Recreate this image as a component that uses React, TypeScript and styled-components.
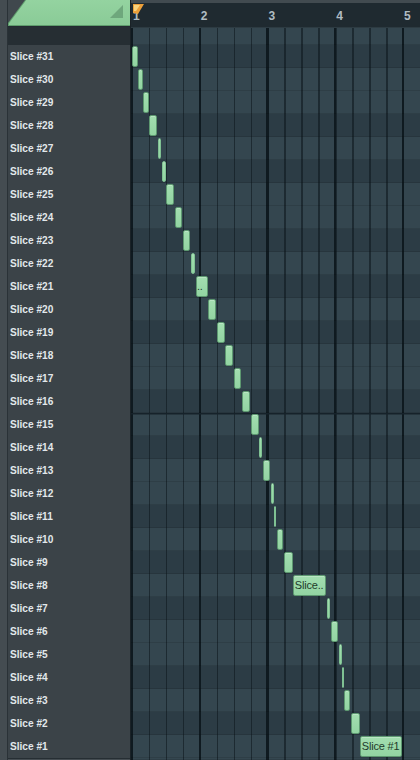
import React from 'react'
import styled, { createGlobalStyle } from 'styled-components'

const GlobalStyle = createGlobalStyle`
  html, body {
    margin: 0;
    padding: 0;
    background: #3f474c;
  }
  body {
    width: 420px;
    height: 760px;
    overflow: hidden;
    font-family: "Liberation Sans", Arial, sans-serif;
  }
`

const BAR = 67.75
const BEAT = BAR / 4
const GRID_X = 131 // page x where the roll begins

// slice edges in page px, #31 first, last value is where #1 ends
const EDGES = [
  131.7, 138.3, 143.3, 149.3, 158, 162, 166.3, 175, 183, 191, 195.5, 208.3,
  216.7, 225.3, 233.5, 241.7, 251, 259.3, 263, 271, 273.7, 277, 283.7, 293.3,
  326.7, 331, 339, 341.5, 344.3, 351, 360.3, 402.7,
]

const SLICES = Array.from({ length: 31 }, (_, i) => {
  const n = 31 - i
  return { n, start: EDGES[i], end: EDGES[i + 1] }
})

// slice #25 sits on a C
const isBlack = (n: number) => [1, 3, 6, 8, 10].includes((((n - 25) % 12) + 12) % 12)

const noteText = (n: number, w: number) => {
  if (w >= 38) return `Slice #${n}`
  if (w >= 30) return 'Slice..'
  if (w >= 12) return '..'
  return ''
}

const Frame = styled.div`
  display: flex;
  width: 420px;
  height: 760px;
  overflow: hidden;
`

const LeftStrip = styled.div`
  flex: 0 0 8px;
  box-sizing: border-box;
  background: #444c51;
  border-right: 1px solid #2a3237;
`

const KeyPanel = styled.div`
  flex: 0 0 123px;
  box-sizing: border-box;
  display: flex;
  flex-direction: column;
  background: #3b4348;
  border-right: 1px solid #1a2227;
`

const TabArea = styled.div`
  flex: 0 0 27px;
  box-sizing: border-box;
  background: #40484d;
  border-bottom: 1px solid #232b30;
`

const TabEdge = styled.div`
  height: 26px;
  box-sizing: border-box;
  padding: 0 0 1px 1px;
  background: #5f9d6d;
  clip-path: polygon(17px 0, 100% 0, 100% 100%, 0 100%, 0 23px);
`

const TabFace = styled.div`
  height: 100%;
  display: flex;
  justify-content: flex-end;
  align-items: flex-end;
  padding: 0 7px 7px 0;
  box-sizing: border-box;
  background: linear-gradient(#94d3a0, #8acb97);
  clip-path: polygon(17.2px 0, 100% 0, 100% 100%, 0 100%, 0 23.3px);
`

const DarkBand = styled.div`
  flex: 0 0 17.5px;
  background: #262e33;
`

const LabelRow = styled.div`
  flex: 0 0 23px;
  display: flex;
  align-items: center;
  padding-left: 2px;
`

const LabelText = styled.span`
  display: inline-block;
  font-size: 11.5px;
  font-weight: 700;
  color: #e2e8eb;
  transform: scaleX(0.88);
  transform-origin: left center;
  white-space: nowrap;
`

const PanelFoot = styled.div`
  flex: 1;
  border-top: 1px solid #262e33;
  background: #454d52;
`

const Roll = styled.div`
  flex: 1;
  display: flex;
  flex-direction: column;
  min-width: 0;
`

const Ruler = styled.div`
  flex: 0 0 28px;
  box-sizing: border-box;
  position: relative;
  display: flex;
  background: #1f2a30;
  border-top: 3px solid #424b50;
  border-bottom: 1px solid #2d3b42;
`

const RulerBar = styled.div`
  flex: 0 0 ${BAR}px;
  box-sizing: border-box;
  padding: 6px 0 0 2px;
  font-size: 12px;
  line-height: 14px;
  font-weight: 700;
  color: #b0bcc2;
`

const Playhead = styled.div`
  position: absolute;
  left: 1.5px;
  top: 1px;
  width: 11px;
  height: 10px;
  display: flex;
`

const Grid = styled.div`
  flex: 1;
  display: flex;
  flex-direction: column;
  overflow: hidden;
`

const Row = styled.div<{ $dark: boolean; $h?: number; $octave?: boolean }>`
  flex: ${(p) => (p.$h ? `0 0 ${p.$h}px` : '1')};
  position: relative;
  background:
    repeating-linear-gradient(90deg, #0f1a20 0 2px, transparent 2px ${BAR}px),
    repeating-linear-gradient(90deg, transparent 0 1px, rgba(14, 24, 30, 0.6) 1px 2.5px, transparent 2.5px ${BEAT}px),
    ${(p) => (p.$dark ? '#2c3c45' : '#34464f')};
  box-shadow: ${(p) =>
    p.$octave
      ? 'inset 0 1.5px 0 #16222a, inset 0 -1px 0 rgba(0, 0, 0, 0.1)'
      : 'inset 0 -1px 0 rgba(0, 0, 0, 0.1)'};
`

const Note = styled.div<{ $thin: boolean }>`
  position: absolute;
  top: 1px;
  height: 21px;
  box-sizing: border-box;
  background: linear-gradient(#a3deb0, #92d4a2);
  border: 1px solid ${(p) => (p.$thin ? '#7fc193' : '#5d9870')};
  border-width: ${(p) => (p.$thin ? '1px 0.5px' : '1px')};
  border-radius: 2px;
  box-shadow: inset 0 1px 0 rgba(255, 255, 255, 0.25);
  overflow: hidden;
  padding-left: 0.5px;
  font-size: 11px;
  letter-spacing: -0.2px;
  line-height: 19px;
  color: #1f3b2b;
  white-space: nowrap;
`

const TabCorner = () => (
  <svg width="13" height="13" viewBox="0 0 13 13">
    <polygon points="13,0 13,13 0,13" fill="#6ea77c" />
    <line x1="13" y1="0" x2="0" y2="13" stroke="#7fb88c" strokeWidth="0.8" />
  </svg>
)

const PlayheadFlag = () => (
  <svg width="11" height="10" viewBox="0 0 11 10">
    <polygon points="0,0 11,0 5,10 0,9" fill="#eca03a" />
    <polygon points="1,1 7,1 3,7 1,7" fill="#f8d27c" />
  </svg>
)

export default function App() {
  return (
    <>
      <GlobalStyle />
      <Frame>
        <LeftStrip />
        <KeyPanel>
          <TabArea>
            <TabEdge>
              <TabFace>
                <TabCorner />
              </TabFace>
            </TabEdge>
          </TabArea>
          <DarkBand />
          {SLICES.map((s) => (
            <LabelRow key={s.n}>
              <LabelText>Slice #{s.n}</LabelText>
            </LabelRow>
          ))}
          <PanelFoot />
        </KeyPanel>
        <Roll>
          <Ruler>
            {[1, 2, 3, 4, 5].map((b) => (
              <RulerBar key={b}>{b}</RulerBar>
            ))}
            <Playhead>
              <PlayheadFlag />
            </Playhead>
          </Ruler>
          <Grid>
            <Row $dark={isBlack(32)} $h={16.5} />
            {SLICES.map((s) => {
              const w = s.end - s.start - 0.6
              return (
                <Row key={s.n} $dark={isBlack(s.n)} $h={23} $octave={s.n === 15}>
                  <Note $thin={w < 4} style={{ left: s.start - GRID_X, width: w }}>
                    {noteText(s.n, w)}
                  </Note>
                </Row>
              )
            })}
            <Row $dark={isBlack(0)} />
          </Grid>
        </Roll>
      </Frame>
    </>
  )
}
